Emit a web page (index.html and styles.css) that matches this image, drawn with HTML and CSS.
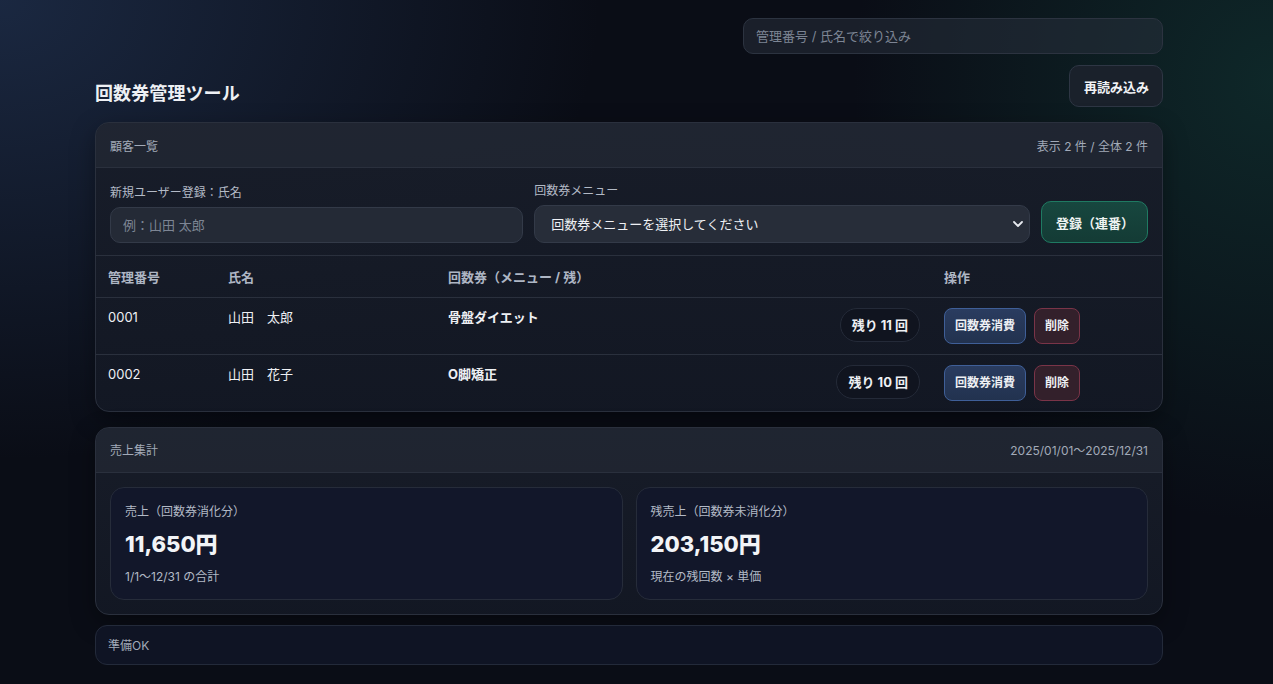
FILE: index.html
```html
<!DOCTYPE html>
<html lang="ja">
<head>
<meta charset="utf-8">
<title>回数券管理ツール</title>
<link rel="stylesheet" href="styles.css">
</head>
<body>
<div class="page">
  <header class="top">
    <h1 class="title">回数券管理ツール</h1>
    <div class="top-right">
      <input class="search" type="text" placeholder="管理番号 / 氏名で絞り込み">
      <button class="btn-reload">再読み込み</button>
    </div>
  </header>

  <section class="card">
    <div class="card-head">
      <span>顧客一覧</span>
      <span>表示 2 件 / 全体 2 件</span>
    </div>
    <div class="form-row">
      <label class="field">
        <span class="field-label">新規ユーザー登録：氏名</span>
        <input class="text-input" type="text" placeholder="例：山田 太郎">
      </label>
      <label class="field">
        <span class="field-label">回数券メニュー</span>
        <span class="select-wrap">
          <select class="select">
            <option>回数券メニューを選択してください</option>
          </select>
          <svg class="chev" width="10" height="6" viewBox="0 0 10 6"><path d="M1 1l4 4 4-4" fill="none" stroke="#e6e9ef" stroke-width="1.8" stroke-linecap="round" stroke-linejoin="round"/></svg>
        </span>
      </label>
      <button class="btn-register">登録（連番）</button>
    </div>
    <table class="table">
      <thead>
        <tr><th class="c-id">管理番号</th><th class="c-name">氏名</th><th class="c-menu">回数券（メニュー / 残）</th><th class="c-ops">操作</th></tr>
      </thead>
      <tbody>
        <tr>
          <td>0001</td><td>山田　太郎</td>
          <td><div class="menu-cell"><span class="menu-name">骨盤ダイエット</span><span class="pill">残り 11 回</span></div></td>
          <td><div class="ops"><button class="btn-use">回数券消費</button><button class="btn-del">削除</button></div></td>
        </tr>
        <tr>
          <td>0002</td><td>山田　花子</td>
          <td><div class="menu-cell"><span class="menu-name">O脚矯正</span><span class="pill">残り 10 回</span></div></td>
          <td><div class="ops"><button class="btn-use">回数券消費</button><button class="btn-del">削除</button></div></td>
        </tr>
      </tbody>
    </table>
  </section>

  <section class="card">
    <div class="card-head">
      <span>売上集計</span>
      <span>2025/01/01〜2025/12/31</span>
    </div>
    <div class="stats">
      <div class="stat">
        <div class="stat-label">売上（回数券消化分）</div>
        <div class="stat-value">11,650円</div>
        <div class="stat-sub">1/1〜12/31 の合計</div>
      </div>
      <div class="stat">
        <div class="stat-label">残売上（回数券未消化分）</div>
        <div class="stat-value">203,150円</div>
        <div class="stat-sub">現在の残回数 × 単価</div>
      </div>
    </div>
  </section>

  <div class="status">準備OK</div>
</div>
</body>
</html>
```

FILE: styles.css
```css
* { box-sizing: border-box; }
html, body { height: 100%; }
body {
  margin: 0;
  padding: 0 15px 0 0;
  overflow: hidden;
  font-family: Inter, "Noto Sans CJK JP", sans-serif;
  color: #e8ebf1;
  background:
    radial-gradient(ellipse 600px 460px at 0% 0%, rgba(40, 62, 100, 0.55), rgba(40, 62, 100, 0) 100%),
    radial-gradient(ellipse 420px 440px at 100% 12%, rgba(20, 72, 64, 0.45), rgba(20, 72, 64, 0) 100%),
    #0a0d16;
}
.page {
  max-width: 1068px;
  margin: 0 auto;
  padding-top: 18px;
  display: flex;
  flex-direction: column;
  gap: 15px;
}
.top {
  display: flex;
  justify-content: space-between;
  align-items: flex-end;
}
.title {
  margin: 0;
  font-size: 18px;
  font-weight: 700;
  line-height: 26px;
  color: #eef0f4;
  letter-spacing: 0.1px;
}
.top-right {
  display: flex;
  flex-direction: column;
  align-items: flex-end;
  gap: 11px;
}
.search {
  width: 420px;
  height: 36px;
  border-radius: 10px;
  border: 1px solid #2c3340;
  background: rgba(40, 47, 60, 0.55);
  padding: 0 12px;
  font: inherit;
  font-size: 13px;
  color: #e8ebf1;
  outline: none;
}
.search::placeholder, .text-input::placeholder { color: #7d8594; }
.btn-reload {
  height: 42px;
  padding: 0 13px 0 14px;
  border-radius: 10px;
  border: 1px solid #2e3644;
  background: #1a212b;
  color: #f1f3f6;
  font: inherit;
  font-size: 13px;
  font-weight: 700;
}
.card {
  border: 1px solid #2a303d;
  border-radius: 14px;
  background: linear-gradient(180deg, rgba(24, 29, 41, 0.95), rgba(19, 24, 36, 0.95));
  overflow: hidden;
  box-shadow: 0 8px 24px rgba(0, 0, 0, 0.35);
}
.card-head {
  height: 45px;
  padding: 0 14px;
  display: flex;
  align-items: center;
  justify-content: space-between;
  font-size: 12px;
  color: #a2aab8;
  background: rgba(40, 45, 58, 0.5);
  border-bottom: 1px solid #2a303d;
}
.form-row {
  display: grid;
  grid-template-columns: 1fr 1.2fr auto;
  gap: 11px;
  align-items: end;
  padding: 15px 14px 12px;
  border-bottom: 1px solid #2a303d;
}
.field { display: flex; flex-direction: column; gap: 6px; }
.field-label { font-size: 12px; color: #b3bac6; line-height: 16px; }
.text-input {
  height: 36px;
  border-radius: 10px;
  border: 1px solid #333a48;
  background: #242a36;
  padding: 0 12px;
  font: inherit;
  font-size: 13px;
  color: #e8ebf1;
  outline: none;
}
.select-wrap { position: relative; display: block; }
.select {
  width: 100%;
  height: 38px;
  appearance: none;
  -webkit-appearance: none;
  border-radius: 10px;
  border: 1px solid #333a48;
  background: #272d39;
  padding: 0 16px;
  font: inherit;
  font-size: 13px;
  color: #eef0f4;
  outline: none;
}
.chev { position: absolute; right: 7px; top: 16px; }
.btn-register {
  height: 42px;
  padding: 0 13px 0 14px;
  border-radius: 10px;
  border: 1px solid #1f7a62;
  background: linear-gradient(180deg, #17473f, #143b35);
  color: #eef3f1;
  font: inherit;
  font-size: 13px;
  font-weight: 700;
}
.table { width: 100%; border-collapse: collapse; font-size: 13px; }
.table th {
  text-align: left;
  font-weight: 700;
  color: #aeb6c4;
  height: 41px;
  padding: 0 12px;
  border-bottom: 1px solid #2a303d;
}
.c-id { width: 120px; }
.c-name { width: 220px; }
.c-ops { width: 230px; }
.table td {
  vertical-align: top;
  padding: 10px 12px 10px;
  line-height: 18px;
  color: #eef0f4;
}
.table tbody tr + tr td { border-top: 1px solid #2a303d; }
.menu-cell { display: flex; justify-content: space-between; align-items: flex-start; }
.menu-name { font-weight: 700; }
.pill {
  height: 34px;
  padding: 0 11px;
  display: inline-flex;
  align-items: center;
  border-radius: 999px;
  border: 1px solid #242a38;
  background: #10141f;
  font-weight: 700;
  font-size: 13px;
}
.ops { display: flex; gap: 8px; }
.btn-use, .btn-del {
  height: 36px;
  padding: 0 10px;
  border-radius: 8px;
  font: inherit;
  font-size: 12px;
  font-weight: 700;
  color: #eef0f4;
}
.btn-use { border: 1px solid #3f5f98; background: linear-gradient(180deg, #2a3c60, #22324f); }
.btn-del { border: 1px solid #7a3448; background: #33202b; }
.stats {
  display: grid;
  grid-template-columns: 1fr 1fr;
  gap: 13px;
  padding: 14px 14px 14px;
}
.stat {
  border: 1px solid #262c3a;
  border-radius: 14px;
  background: #12172a;
  padding: 15px 14px 13px;
}
.stat-label { font-size: 12px; color: #b3bac6; line-height: 18px; }
.stat-value { font-size: 22px; font-weight: 800; color: #f2f4f7; line-height: 28px; margin-top: 9px; }
.stat-sub { font-size: 12px; color: #b3bac6; line-height: 18px; margin-top: 10px; }
.status {
  height: 40px;
  margin-top: -5px;
  border: 1px solid #232a3a;
  border-radius: 12px;
  background: #0f1424;
  padding: 0 12px;
  display: flex;
  align-items: center;
  font-size: 12px;
  color: #a2aab8;
}
```
